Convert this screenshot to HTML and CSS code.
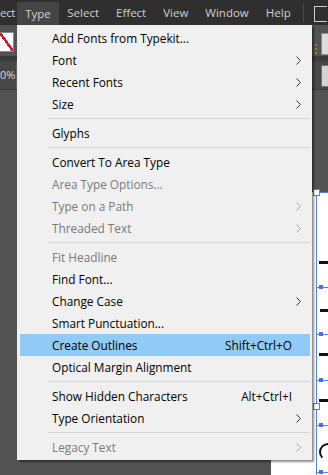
FILE: index.html
```html
<!DOCTYPE html>
<html lang="en">
<head>
  <meta charset="UTF-8" />
  <title>Type menu</title>
  <link rel="stylesheet" href="styles.css">
</head>
<body>

<div class="menubar">
  <span class="mb-item mb-cut">ect</span>
  <span class="mb-item mb-open">Type</span>
  <span class="mb-item">Select</span>
  <span class="mb-item">Effect</span>
  <span class="mb-item">View</span>
  <span class="mb-item">Window</span>
  <span class="mb-item">Help</span>
  <span class="mb-divider"></span>
  <span class="mb-box"></span>
</div>

<div class="work">
  <div class="control-bar">
    <div class="fill-swatch"><span class="drop"></span></div>
    <div class="bar-right">
      <span class="grip"></span>
      <span class="bar-box"></span>
    </div>
  </div>
  <div class="bar-divider"></div>
  <div class="tab-bar">
    <span class="zoom-field">0%</span>
    <span class="tab-box"></span>
  </div>

  <!-- artboard, partly hidden under the menu -->
  <div class="artboard">
    <div class="bbox"></div>
    <span class="handle hollow" style="top:-3px"></span>
    <span class="handle hollow" style="top:211px"></span>
    <span class="guide" style="top:95px"></span>
    <span class="guide" style="top:142px"></span>
    <span class="guide" style="top:188px"></span>
    <span class="guide" style="top:233px"></span>
    <span class="guide" style="top:280px"></span>
    <span class="glyph" style="top:69px"></span>
    <span class="glyph hook" style="top:117px"></span>
    <span class="glyph" style="top:161px"></span>
    <span class="glyph" style="top:207px"></span>
    <span class="glyph curve" style="top:251px"></span>
  </div>

  <div class="menu">
    <div class="item">Add Fonts from Typekit...</div>
    <div class="item sub">Font<svg class="arrow" viewBox="0 0 5 9"><path d="M0.5 0.5 L4.5 4.5 L0.5 8.5"/></svg></div>
    <div class="item sub">Recent Fonts<svg class="arrow" viewBox="0 0 5 9"><path d="M0.5 0.5 L4.5 4.5 L0.5 8.5"/></svg></div>
    <div class="item sub">Size<svg class="arrow" viewBox="0 0 5 9"><path d="M0.5 0.5 L4.5 4.5 L0.5 8.5"/></svg></div>
    <div class="sep"></div>
    <div class="item">Glyphs</div>
    <div class="sep"></div>
    <div class="item">Convert To Area Type</div>
    <div class="item off">Area Type Options...</div>
    <div class="item off sub">Type on a Path<svg class="arrow" viewBox="0 0 5 9"><path d="M0.5 0.5 L4.5 4.5 L0.5 8.5"/></svg></div>
    <div class="item off sub">Threaded Text<svg class="arrow" viewBox="0 0 5 9"><path d="M0.5 0.5 L4.5 4.5 L0.5 8.5"/></svg></div>
    <div class="sep"></div>
    <div class="item off">Fit Headline</div>
    <div class="item">Find Font...</div>
    <div class="item sub">Change Case<svg class="arrow" viewBox="0 0 5 9"><path d="M0.5 0.5 L4.5 4.5 L0.5 8.5"/></svg></div>
    <div class="item">Smart Punctuation...</div>
    <div class="item active">Create Outlines<span class="key">Shift+Ctrl+O</span></div>
    <div class="item">Optical Margin Alignment</div>
    <div class="sep"></div>
    <div class="item">Show Hidden Characters<span class="key">Alt+Ctrl+I</span></div>
    <div class="item sub">Type Orientation<svg class="arrow" viewBox="0 0 5 9"><path d="M0.5 0.5 L4.5 4.5 L0.5 8.5"/></svg></div>
    <div class="sep"></div>
    <div class="item off sub">Legacy Text<svg class="arrow" viewBox="0 0 5 9"><path d="M0.5 0.5 L4.5 4.5 L0.5 8.5"/></svg></div>
  </div>
</div>

</body>
</html>
```

FILE: styles.css
```css
body {
  margin: 0;
  width: 328px;
  height: 475px;
  overflow: hidden;
  background: #535353;
  font-family: "Open Sans", "Noto Sans", sans-serif;
  font-size: 12px;
}
.menubar {
  display: flex;
  align-items: stretch;
  height: 25px;
  background: #2f2f2f;
  color: #d0d0d0;
  font-size: 11.5px;
}
.mb-item {
  display: flex;
  align-items: center;
  padding: 0 8.5px;
}
.mb-cut {
  padding: 0 2px 0 0;
  letter-spacing: -0.3px;
}
.mb-open {
  background: #454545;
  margin-top: 2px;
  padding: 0 8px 0 8px;
}
.mb-divider {
  width: 1px;
  margin: 3px 0 3px 4px;
  background: #4a4a4a;
}
.mb-box {
  width: 12px;
  height: 14px;
  margin: 6px 0 0 10px;
  border: 1px solid #cfcfcf;
  border-right: none;
}
.work {
  position: relative;
  height: 450px;
}
.control-bar {
  display: flex;
  justify-content: space-between;
  height: 31px;
  background: #535353;
}
.fill-swatch {
  position: relative;
  width: 13px;
  height: 18px;
  margin-top: 7px;
  background: #fff linear-gradient(to top right, transparent 44%, #d0202a 44%, #d0202a 56%, transparent 56%);
  border: 1px solid #888;
  border-left: none;
}
.drop {
  position: absolute;
  left: 16px;
  top: 11px;
  border: 3px solid transparent;
  border-top-color: #c8c8c8;
}
.bar-right {
  display: flex;
  align-items: center;
  gap: 4px;
}
.grip {
  width: 2px;
  height: 10px;
  margin-top: 16px;
  background: repeating-linear-gradient(#b07a3a 0 2px, transparent 2px 4px);
}
.bar-box {
  width: 6px;
  height: 20px;
  margin-top: 6px;
  background: #dcdcdc;
  border: 1px solid #8a8a8a;
  border-right: none;
}
.bar-divider {
  height: 5px;
  background: #3b3b3b;
}
.tab-bar {
  display: flex;
  justify-content: space-between;
  height: 28px;
  background: #474747;
  border-bottom: 1px solid #3b3b3b;
}
.zoom-field {
  padding: 6px 1px 0 0;
  color: #d8d8d8;
  font-size: 11px;
  border-right: 1px solid #5e5e5e;
}
.tab-box {
  width: 6px;
  height: 20px;
  margin-top: 4px;
  background: #d2d2d2;
  border: 1px solid #707070;
  border-right: none;
}
.artboard {
  position: absolute;
  left: 271px;
  top: 167px;
  right: 0;
  bottom: 0;
  background: #fff;
}
.bbox {
  position: absolute;
  left: 45px;
  top: 0;
  bottom: 0;
  width: 1px;
  background: #5a7fd6;
}
.bbox::before {
  content: "";
  position: absolute;
  left: 0;
  top: 0;
  width: 20px;
  height: 1px;
  background: #5a7fd6;
}
.handle {
  position: absolute;
  left: 42px;
  width: 5px;
  height: 5px;
  border: 1px solid #5a7fd6;
  background: #fff;
}
.guide {
  position: absolute;
  left: 46px;
  right: 0;
  height: 1px;
  background: #5a7fd6;
}
.guide::before {
  content: "";
  position: absolute;
  left: 2px;
  top: -2px;
  width: 4px;
  height: 4px;
  background: #4a6fe0;
}
.glyph {
  position: absolute;
  left: 48px;
  right: 0;
  height: 3px;
  background: #111;
}
.glyph.hook {
  left: 49px;
  width: 6px;
  height: 3px;
  border-left: 2px solid #111;
}
.glyph.curve {
  height: 14px;
  left: 48px;
  width: 14px;
  background: none;
  border: 2px solid #111;
  border-radius: 50%;
  border-right-color: transparent;
  border-bottom-color: transparent;
}
.menu {
  position: absolute;
  left: 17px;
  top: 0;
  width: 290px;
  padding: 2px 2px 2px 3px;
  background: #f0f0f0;
  color: #000;
  box-shadow: 2px 2px 2px rgba(0, 0, 0, 0.45);
}
.item {
  display: flex;
  align-items: center;
  height: 22px;
  padding: 0 9px 0 32px;
  font-size: 11.8px;
}
.item.active {
  background: #91c9f7;
}
.item.off {
  color: #7a7a7a;
}
.key {
  margin-left: auto;
  margin-right: 9px;
}
.arrow {
  margin-left: auto;
  width: 5px;
  height: 9px;
  fill: none;
  stroke: #333;
  stroke-width: 1;
}
.item.off .arrow {
  stroke: #a6a6a6;
}
.sep {
  height: 1px;
  margin: 3px 0 3px 28px;
  background: #d5d5d5;
}
```
